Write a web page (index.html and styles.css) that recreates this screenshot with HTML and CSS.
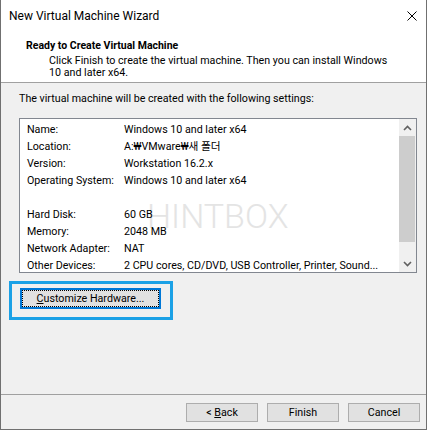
FILE: index.html
```html
<!DOCTYPE html>
<html lang="en">
<head>
<meta charset="utf-8">
<title>New Virtual Machine Wizard</title>
<link rel="stylesheet" href="styles.css">
</head>
<body>
<div class="window">
  <div class="titlebar">
    <span class="title">New Virtual Machine Wizard</span>
    <svg class="close" width="10" height="10" viewBox="0 0 10 10"><path d="M0.5 0.5 L9.5 9.5 M9.5 0.5 L0.5 9.5" stroke="#000" stroke-width="1" fill="none"/></svg>
  </div>
  <div class="header">
    <h1 class="heading">Ready to Create Virtual Machine</h1>
    <p class="subtitle">Click Finish to create the virtual machine. Then you can install Windows<br>10 and later x64.</p>
  </div>
  <div class="content">
    <p class="caption">The virtual machine will be created with the following settings:</p>
    <div class="listbox">
      <div class="watermark">HINTBOX</div>
      <div class="rows">
        <div class="row"><span class="label">Name:</span><span class="value">Windows 10 and later x64</span></div>
        <div class="row"><span class="label">Location:</span><span class="value">A:₩VMware₩새 폴더</span></div>
        <div class="row"><span class="label">Version:</span><span class="value">Workstation 16.2.x</span></div>
        <div class="row"><span class="label">Operating System:</span><span class="value">Windows 10 and later x64</span></div>
        <div class="row"></div>
        <div class="row"><span class="label">Hard Disk:</span><span class="value">60 GB</span></div>
        <div class="row"><span class="label">Memory:</span><span class="value">2048 MB</span></div>
        <div class="row"><span class="label">Network Adapter:</span><span class="value">NAT</span></div>
        <div class="row"><span class="label">Other Devices:</span><span class="value">2 CPU cores, CD/DVD, USB Controller, Printer, Sound...</span></div>
      </div>
      <div class="scrollbar">
        <div class="arrow"><svg width="9" height="6" viewBox="0 0 9 6"><path d="M1 5 L4.5 1.5 L8 5" stroke="#606060" stroke-width="1.6" fill="none"/></svg></div>
        <div class="track"><div class="thumb"></div></div>
        <div class="arrow"><svg width="9" height="6" viewBox="0 0 9 6"><path d="M1 1 L4.5 4.5 L8 1" stroke="#606060" stroke-width="1.6" fill="none"/></svg></div>
      </div>
    </div>
    <div class="custom-wrap">
      <button class="btn-custom"><u>C</u>ustomize Hardware...</button>
    </div>
  </div>
  <div class="footer">
    <button class="btn">&lt; <u>B</u>ack</button>
    <button class="btn">Finish</button>
    <button class="btn">Cancel</button>
  </div>
</div>
</body>
</html>
```
FILE: styles.css
```css
* {
  box-sizing: border-box;
}

html,
body {
  margin: 0;
  padding: 0;
  background: #ffffff;
}

body {
  width: 428px;
  height: 430px;
  overflow: hidden;
  font-family: Roboto, "Noto Sans CJK KR", sans-serif;
  font-size: 10.7px;
  color: #000000;
}

.window {
  width: 427px;
  height: 430px;
  display: flex;
  flex-direction: column;
  background: #f0f0f0;
  border-left: 1px solid #707070;
  border-right: 1px solid #707070;
  border-bottom: 1px solid #707070;
}

/* title bar */
.titlebar {
  height: 31px;
  flex: none;
  display: flex;
  align-items: center;
  justify-content: space-between;
  padding: 0 9px 0 8px;
  background: #ffffff;
  font-size: 12px;
}

.close {
  display: block;
}

/* white header band */
.header {
  flex: none;
  background: #ffffff;
  border-bottom: 1px solid #a0a0a0;
  padding: 7px 0 3px 25px;
}

.heading {
  margin: 0;
  font-size: 10.5px;
  font-weight: bold;
  line-height: 15px;
}

.subtitle {
  margin: 2px 0 0 23px;
  line-height: 12px;
}

/* main area */
.content {
  flex: 1;
  padding: 8px 0 0 18px;
}

.caption {
  margin: 0;
  line-height: 15px;
}

.listbox {
  position: relative;
  margin-top: 12px;
  width: 398px;
  height: 155px;
  display: flex;
  background: #ffffff;
  border: 1px solid #828790;
}

.rows {
  position: relative;
  flex: 1;
  padding: 2px 0 0 7px;
}

.row {
  display: flex;
  height: 17px;
  line-height: 17px;
  white-space: nowrap;
}

.label {
  width: 97px;
  flex: none;
}

.scrollbar {
  width: 17px;
  flex: none;
  display: flex;
  flex-direction: column;
  background: #f0f0f0;
}

.arrow {
  height: 17px;
  flex: none;
  display: flex;
  align-items: center;
  justify-content: center;
}

.arrow svg {
  display: block;
}

.track {
  flex: 1;
}

.thumb {
  height: 106px;
  margin: 0 1px 0 0;
  background: #cdcdcd;
}

/* faint stamp sitting behind the list text */
.watermark {
  position: absolute;
  left: 127px;
  top: 77px;
  font-size: 34px;
  font-weight: 300;
  line-height: 40px;
  color: #e4e4e4;
  pointer-events: none;
}

/* focused button with its callout frame */
.custom-wrap {
  position: relative;
  margin: 15px 0 0 1px;
  width: 141px;
}

.custom-wrap::after {
  content: "";
  position: absolute;
  left: -11px;
  top: -7px;
  right: -12px;
  bottom: -11px;
  border: 3px solid #1ba1e6;
}

.btn-custom {
  display: block;
  width: 141px;
  height: 21px;
  padding: 0;
  font: inherit;
  color: #000000;
  background: #e1e1e1;
  border: 2px solid #0078d7;
  outline: 1px dotted #000000;
  outline-offset: -3px;
}

/* bottom button row */
.footer {
  flex: none;
  display: flex;
  justify-content: flex-end;
  gap: 9px;
  padding: 8px 6px 7px 0;
  border-top: 1px solid #a0a0a0;
}

.btn {
  width: 72px;
  height: 19px;
  padding: 0;
  font: inherit;
  color: #000000;
  background: #e1e1e1;
  border: 1px solid #adadad;
}
```
